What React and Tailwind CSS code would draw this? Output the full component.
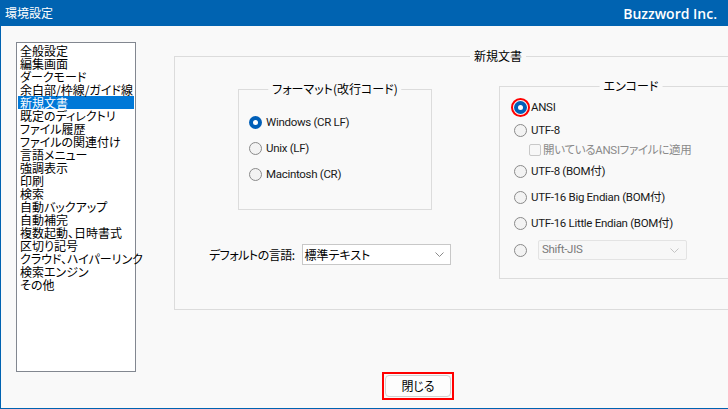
import React from "react";

const jp = "font-['Noto_Sans_CJK_JP',sans-serif] [font-feature-settings:'palt']";
const ui = "font-['Roboto','Noto_Sans_CJK_JP',sans-serif] [font-feature-settings:'palt'] text-[11.5px] tracking-[-0.3px]";

const pages = [
  "全般設定",
  "編集画面",
  "ダークモード",
  "余白部/枠線/ガイド線",
  "新規文書",
  "既定のディレクトリ",
  "ファイル履歴",
  "ファイルの関連付け",
  "言語メニュー",
  "強調表示",
  "印刷",
  "検索",
  "自動バックアップ",
  "自動補完",
  "複数起動、日時書式",
  "区切り記号",
  "クラウド、ハイパーリンク",
  "検索エンジン",
  "その他",
];

function GroupBox({ title, className, children }) {
  return (
    <div className={`relative border border-[#dcdcdc] ${className}`}>
      <span className={`absolute left-1/2 top-[-9px] -translate-x-1/2 whitespace-nowrap bg-[#f9f9f9] px-[4px] text-[12px] leading-[16px] text-black ${jp}`}>
        {title}
      </span>
      {children}
    </div>
  );
}

function Radio({ checked }) {
  if (checked) {
    return (
      <span className="flex h-[13px] w-[13px] shrink-0 items-center justify-center rounded-full bg-[#005fb8]">
        <span className="h-[5px] w-[5px] rounded-full bg-white" />
      </span>
    );
  }
  return <span className="h-[13px] w-[13px] shrink-0 rounded-full border border-[#8a8a8a] bg-[#f3f3f3]" />;
}

function Chevron({ color }) {
  return (
    <svg width="9" height="5" viewBox="0 0 9 5" className="shrink-0">
      <path d="M0.5 0.5 L4.5 4.5 L8.5 0.5" fill="none" stroke={color} strokeWidth="1" />
    </svg>
  );
}

function Option({ label, checked, h }) {
  return (
    <div className={`flex items-center gap-[4px] ${h}`}>
      <Radio checked={checked} />
      <span className={`leading-[16px] text-[#1a1a1a] ${ui}`}>{label}</span>
    </div>
  );
}

export default function App() {
  return (
    <div className="flex h-[409px] w-[728px] flex-col overflow-hidden bg-[#f9f9f9]">
      <div className="flex h-[26px] shrink-0 items-center justify-between bg-[#0063b1] pl-[5px] pr-[11px] text-white">
        <span className={`text-[12px] ${jp}`}>環境設定</span>
        <span className="font-['Open_Sans',sans-serif] text-[14px] font-semibold">Buzzword Inc.</span>
      </div>

      <div className="flex flex-1 border-b border-l border-[#0063b1] pl-[15px]">
        <div className={`mt-[16px] h-[330px] w-[120px] shrink-0 border border-[#828790] bg-white px-[1px] pt-[1px] ${jp}`}>
          {pages.map((p) => (
            <div
              key={p}
              className={`h-[13px] whitespace-nowrap px-[2px] text-[12px] leading-[13px] ${
                p === "新規文書" ? "bg-[#0078d7] text-white" : "text-black"
              }`}
            >
              {p}
            </div>
          ))}
        </div>

        <div className="ml-[38px] flex shrink-0 flex-col">
          <GroupBox title="新規文書" className="mt-[30px] flex h-[254px] w-[648px] items-start pt-[29px]">
            <div className="mt-[3px] flex w-[324px] shrink-0 flex-col pl-[34px]">
              <GroupBox title="フォーマット(改行コード)" className="ml-[29px] h-[121px] w-[194px] pl-[10px] pt-[19px]">
                <Option label="Windows (CR LF)" checked h="h-[26px]" />
                <Option label="Unix (LF)" h="h-[26px]" />
                <Option label="Macintosh (CR)" h="h-[26px]" />
              </GroupBox>

              <div className="mt-[34px] flex h-[21px] items-center gap-[7px]">
                <span className={`text-[12px] tracking-[-0.5px] text-black ${jp}`}>デフォルトの言語:</span>
                <div className="flex h-[21px] w-[149px] items-center justify-between border border-[#c8c8c8] bg-white pl-[2px] pr-[6px]">
                  <span className={`text-[12px] text-black ${jp}`}>標準テキスト</span>
                  <Chevron color="#8a8a8a" />
                </div>
              </div>
            </div>

            <GroupBox title="エンコード" className="h-[193px] w-[264px] shrink-0 pl-[14px] pt-[9px]">
              <div className="relative flex h-[22px] items-center gap-[4px]">
                <Radio checked />
                <span className="absolute left-[-3px] top-[1.5px] h-[19px] w-[19px] rounded-full border-2 border-[#ff0000]" />
                <span className={`leading-[16px] text-[#1a1a1a] ${ui}`}>ANSI</span>
              </div>
              <Option label="UTF-8" h="h-[24px]" />
              <div className="ml-[15px] flex h-[16px] items-center gap-[2px]">
                <span className="h-[12px] w-[12px] shrink-0 rounded-[2px] border border-[#c8c8c8] bg-[#f7f7f7]" />
                <span className={`leading-[16px] text-[#8a8a8a] ${ui}`}>開いているANSIファイルに適用</span>
              </div>
              <Option label="UTF-8 (BOM付)" h="h-[26px]" />
              <Option label="UTF-16 Big Endian (BOM付)" h="h-[26px]" />
              <Option label="UTF-16 Little Endian (BOM付)" h="h-[26px]" />
              <div className="flex h-[28px] items-center gap-[11px]">
                <Radio />
                <div className="flex h-[20px] w-[149px] items-center justify-between rounded-[2px] border border-[#e3e3e3] bg-[#f7f7f7] pl-[3px] pr-[7px]">
                  <span className={`text-[#7a7a7a] ${ui}`}>Shift-JIS</span>
                  <Chevron color="#c4c4c4" />
                </div>
              </div>
            </GroupBox>
          </GroupBox>

          <div className="ml-[208px] mt-[62px] w-fit border-2 border-[#ff0000] p-[1px]">
            <button className={`flex h-[22px] w-[66px] items-center justify-center rounded-[4px] border border-[#d0d0d0] bg-[#fdfdfd] text-[12px] text-black ${jp}`}>
              閉じる
            </button>
          </div>
        </div>
      </div>
    </div>
  );
}
